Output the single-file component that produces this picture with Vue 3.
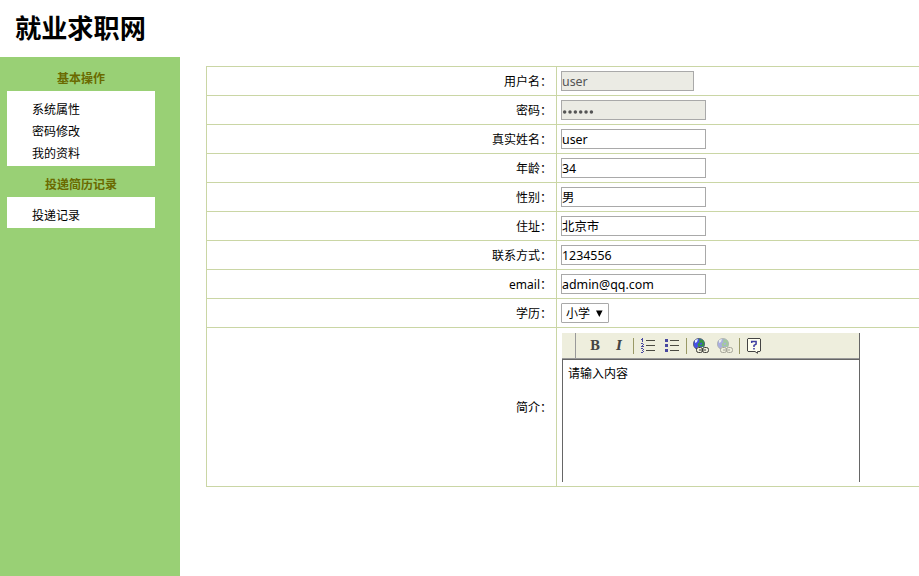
<script setup>
const groups = [
  { title: '基本操作', items: ['系统属性', '密码修改', '我的资料'] },
  { title: '投递简历记录', items: ['投递记录'] },
]
const fields = [
  { label: '用户名：', value: 'user', disabled: true, short: true },
  { label: '密码：', value: '••••••', disabled: true, dots: true },
  { label: '真实姓名：', value: 'user' },
  { label: '年龄：', value: '34' },
  { label: '性别：', value: '男' },
  { label: '住址：', value: '北京市' },
  { label: '联系方式：', value: '1234556' },
  { label: 'email：', value: 'admin@qq.com' },
]
</script>

<template>
  <div class="page">
    <header class="header"><h1>就业求职网</h1></header>
    <div class="body">
      <aside class="sidebar">
        <section v-for="g in groups" :key="g.title" class="group">
          <h2>{{ g.title }}</h2>
          <ul>
            <li v-for="i in g.items" :key="i">{{ i }}</li>
          </ul>
        </section>
      </aside>
      <main class="form">
        <div v-for="f in fields" :key="f.label" class="row">
          <div class="label">{{ f.label }}</div>
          <div class="cell">
            <div class="input" :class="{ disabled: f.disabled, short: f.short }">
              <svg v-if="f.dots" class="dots" width="34" height="6" viewBox="0 0 34 6">
                <circle v-for="n in 6" :key="n" :cx="n * 5.35 - 2.7" cy="3" r="1.75" fill="#545454" />
              </svg>
              <span v-else>{{ f.value }}</span>
            </div>
          </div>
        </div>
        <div class="row">
          <div class="label">学历：</div>
          <div class="cell">
            <div class="select">
              <span>小学</span>
              <svg width="7" height="7" viewBox="0 0 7 7"><path d="M0 0.5H6.6L3.3 7Z" fill="#000" /></svg>
            </div>
          </div>
        </div>
        <div class="row tall">
          <div class="label">简介：</div>
          <div class="cell">
            <div class="editor">
              <div class="toolbar">
                <span class="grip"></span>
                <span class="tool bold">B</span>
                <span class="tool italic">I</span>
                <span class="sep"></span>
                <span class="tool">
                  <svg width="14" height="16" viewBox="0 0 14 16" shape-rendering="crispEdges">
                    <path d="M5 2h9v1H5zM5 7h9v1H5zM5 12h9v1H5z" fill="#4a4a42" />
                    <path d="M1 0h1v4H1zM0 1h1v1H0zM0 5h2v1H0zM2 6h1v1H2zM1 7h1v1H1zM0 8h3v1H0zM0 10h2v1H0zM2 11h1v1H2zM1 12h1v1H1zM2 13h1v1H2zM0 14h2v1H0z" fill="#4848a0" />
                  </svg>
                </span>
                <span class="tool">
                  <svg width="14" height="16" viewBox="0 0 14 16" shape-rendering="crispEdges">
                    <path d="M5 2h9v1H5zM5 7h9v1H5zM5 12h9v1H5z" fill="#4a4a42" />
                    <path d="M0 1h3v3H0zM0 6h3v3H0zM0 11h3v3H0z" fill="#4848a0" />
                  </svg>
                </span>
                <span class="sep"></span>
                <span v-for="k in 2" :key="k" class="tool" :class="{ faded: k === 2 }">
                  <svg width="16" height="16" viewBox="0 0 16 16">
                    <circle cx="6" cy="6" r="5.6" fill="#4650e6" stroke="#4c5868" stroke-width=".8" />
                    <path d="M6 1l4 1 1.5 3-1 4-3-1-2 1-1-3 2-2z" fill="#359340" />
                    <path d="M6.5 5.5l2-1 1 1.5-2 1z" fill="#4650e6" />
                    <path d="M2 2l3-1-1 3-2 1z" fill="#e4edff" />
                    <path d="M4 9h11v6H4z" fill="#eeeedd" />
                    <rect x="3.5" y="9.5" width="6" height="5" rx="2" fill="none" stroke="#3c3c38" />
                    <rect x="9.5" y="9.5" width="6" height="5" rx="2" fill="none" stroke="#3c3c38" />
                    <path d="M6 12h7" stroke="#3c3c38" />
                  </svg>
                </span>
                <span class="sep"></span>
                <span class="tool">
                  <svg width="16" height="16" viewBox="0 0 16 16">
                    <path d="M2 .5h12l.5.5v12l-.5.5h-2.5V15.300l-2.500-1.800H2l-.5-.5V1z" fill="#fffff0" stroke="#444" />
                    <path d="M5.700 5V3.600h4.400V6L8 7.500V9" fill="none" stroke="#4040a0" stroke-width="1.500" />
                    <path d="M7.200 10h1.600v1.500H7.200z" fill="#4040a0" />
                  </svg>
                </span>
              </div>
              <div class="content">请输入内容</div>
            </div>
          </div>
        </div>
      </main>
    </div>
  </div>
</template>

<style>
body { margin: 0; overflow: hidden; }
</style>
<style scoped>
.page { width: 919px; height: 576px; overflow: hidden; background: #fff; color: #000; font: 12px/16px "Noto Sans", "Noto Sans CJK SC", sans-serif; display: flex; flex-direction: column; }
.header { height: 57px; box-sizing: border-box; padding: 8px 0 0 15px; }
h1 { margin: 0; font-size: 26.200px; line-height: 40px; font-weight: 700; }
.body { display: flex; flex: 1; }
.sidebar { width: 180px; box-sizing: border-box; padding: 10px 25px 0 7px; background: #99d075; }
h2 { margin: 0; height: 24px; line-height: 23px; font-size: 12px; font-weight: 700; text-align: center; color: #6a6a00; }
.group + .group h2 { height: 23px; line-height: 21px; }
.group + .group { margin-top: 8px; }
ul { list-style: none; margin: 0; padding: 8px 0 1px 25px; background: #fff; }
li { height: 22px; line-height: 22px; }
.form { margin: 9px 0 0 26px; width: 713px; height: 421px; box-sizing: border-box; border-top: 1px solid #cad6a5; border-left: 1px solid #cad6a5; }
.row { display: flex; height: 29px; box-sizing: border-box; border-bottom: 1px solid #cad6a5; }
.row.tall { height: 159px; }
.label { width: 350px; box-sizing: border-box; border-right: 1px solid #cad6a5; padding: 2px 4px 0 0; display: flex; align-items: center; justify-content: flex-end; white-space: nowrap; }
.cell { padding: 4px; flex: 1; }
.input { box-sizing: border-box; width: 145px; height: 20px; border: 1px solid #a9a9a9; line-height: 19px; display: flex; align-items: center; white-space: nowrap; font-size: 12.400px; }
.input.short { width: 133px; }
.disabled { background: #ebebe4; color: #545454; }
.dots { margin-top: 3px; }
.select { box-sizing: border-box; width: 48px; height: 20px; border: 1px solid #a9a9a9; border-radius: 1px; display: flex; align-items: center; gap: 6px; padding-left: 4px; }
.select span { padding-top: 2px; }
.editor { margin: 1px 0 0 1px; width: 298px; height: 149px; box-sizing: border-box; border-right: 1px solid #666; display: flex; flex-direction: column; }
.toolbar { height: 27px; box-sizing: border-box; background: #eeeedd; border-bottom: 1px solid #666; box-shadow: inset 0 -1px #999; display: flex; align-items: center; }
.grip { width: 13px; height: 25px; align-self: flex-start; border-right: 1px solid #999; margin-right: 7px; }
.tool { width: 24px; height: 24px; display: flex; align-items: center; justify-content: center; }
.bold, .italic { font: 700 12px/24px "DejaVu Serif", serif; color: #444; }
.italic { font-style: italic; }
.sep { width: 1px; height: 16px; background: #999966; margin: 0 2px; }
.faded svg { opacity: .4; }
.content { flex: 1; border-left: 1px solid #666; padding: 6px 5px; }
</style>
